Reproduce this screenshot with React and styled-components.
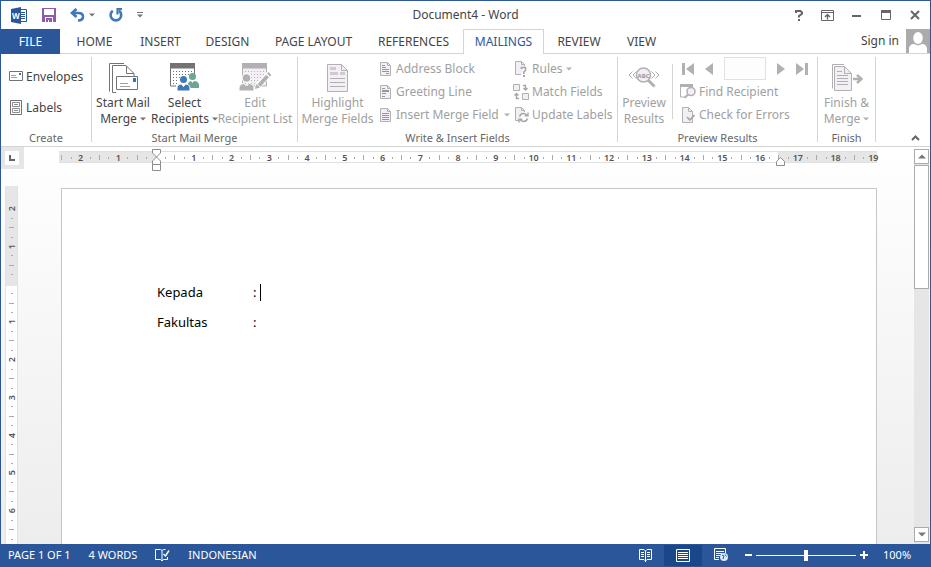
import React from 'react'
import styled, {createGlobalStyle, css} from 'styled-components'

const blue = '#2b579a'
const activeBlue = '#19478a'
const textColor = '#444444'
const mutedColor = '#a0a0a0'
const lineColor = '#d4d4d4'
const iconGray = '#737373'
const iconMuted = '#b1b1b1'
const iconMutedFill = '#f4eef6'
const uiFont = '"Noto Sans", "Open Sans", sans-serif'

const GlobalStyle = createGlobalStyle`
    *, *::before, *::after {
        box-sizing: border-box;
    }
    body {
        margin: 0;
    }
    button, input {
        font: inherit;
        color: inherit;
    }
    svg {
        display: block;
        flex: none;
    }
`

const Window = styled.div`
    display: flex;
    flex-direction: column;
    height: 100vh;
    border: 1px solid ${blue};
    background: #fff;
    color: ${textColor};
    font-family: ${uiFont};
    font-size: 12px;
    line-height: 16px;
    overflow: hidden;
`

const PlainButton = styled.button`
    display: flex;
    align-items: center;
    justify-content: center;
    padding: 0;
    border: 0;
    background: none;
    white-space: nowrap;
`

/* title bar */
const TitleBar = styled.header`
    display: grid;
    grid-template-columns: 1fr auto 1fr;
    align-items: center;
    height: 28px;
    flex: none;
`
const QuickAccess = styled.div`
    display: flex;
    align-items: center;
    gap: 14px;
    padding-left: 10px;
`
const UndoGroup = styled.div`
    display: flex;
    align-items: center;
    gap: 4px;
`
const Title = styled.h1`
    margin: 0;
    font-size: 12px;
    font-weight: 400;
`
const WindowControls = styled.div`
    display: flex;
    justify-content: flex-end;
    padding-right: 1px;
`
const WindowButton = styled(PlainButton)`
    width: 29px;
    height: 28px;
`

/* tabs */
const TabBar = styled.nav`
    display: flex;
    height: 25px;
    flex: none;
    border-bottom: 1px solid ${lineColor};
`
const Tab = styled(PlainButton)`
    width: ${p => p.$width}px;
    height: 25px;
    border: 1px solid transparent;
    border-bottom: 0;
    ${p => p.$file && css`
        background: ${blue};
        color: #fff;
    `}
    ${p => p.$active && css`
        background: #fff;
        border-color: ${lineColor};
        color: ${blue};
    `}
`
const Account = styled.div`
    display: flex;
    align-items: center;
    gap: 7px;
    height: 24px;
    margin-left: auto;
`

/* ribbon */
const Ribbon = styled.section`
    display: flex;
    height: 93px;
    flex: none;
    padding: 3px 0 4px;
    border-bottom: 1px solid ${lineColor};
`
const Group = styled.div`
    display: flex;
    flex-direction: column;
    width: ${p => p.$width}px;
    flex: none;
    border-right: 1px solid ${lineColor};
`
const GroupBody = styled.div`
    display: flex;
    flex: 1;
    padding-left: ${p => p.$pad || 0}px;
`
const GroupLabel = styled.div`
    height: 16px;
    margin-bottom: -4px;
    font-size: 11px;
    text-align: center;
    color: #666;
    white-space: nowrap;
`
const Column = styled.div`
    display: flex;
    flex-direction: column;
    width: ${p => p.$width}px;
    margin-left: ${p => p.$gap || 0}px;
`
const CreateColumn = styled(Column)`
    gap: 8px;
    padding-top: 8px;
`
const SmallButton = styled(PlainButton)`
    justify-content: flex-start;
    gap: 3px;
    height: 23px;
    color: ${p => p.disabled ? mutedColor : textColor};
`
const IconSlot = styled.span`
    display: flex;
    justify-content: center;
    width: ${p => p.$width || 14}px;
`
const MenuMark = styled.span`
    display: flex;
    margin-left: ${p => p.$gap || 0}px;
`
const LargeButton = styled(PlainButton)`
    flex-direction: column;
    justify-content: flex-start;
    width: ${p => p.$width}px;
    height: 72px;
    padding-top: 3px;
    color: ${p => p.disabled ? mutedColor : textColor};
`
const LargeIcon = styled.span`
    display: flex;
    align-items: center;
    justify-content: center;
    height: 35px;
`
const LargeLine = styled.span`
    display: flex;
    align-items: center;
    gap: 3px;
    height: 16px;
`
const Divider = styled.div`
    width: 1px;
    height: 55px;
    margin: 7px 7px 0 4px;
    background: ${lineColor};
`
const RecordNav = styled.div`
    display: flex;
    align-items: center;
    gap: 11px;
    height: 23px;
    padding-left: 2px;
`
const RecordInput = styled.input`
    width: 42px;
    height: 23px;
    padding: 0 4px;
    border: 1px solid #e1e1e1;
    background: #fdfdfd;
`
const CollapseButton = styled(PlainButton)`
    align-self: flex-end;
    width: 20px;
    height: 8px;
    margin: 0 5px 0 auto;
`

/* workspace */
const Workspace = styled.main`
    display: flex;
    flex: 1;
    min-height: 0;
    background: linear-gradient(#ffffff, #ededed);
`
const RulerColumn = styled.div`
    display: flex;
    flex-direction: column;
    width: 23px;
    flex: none;
`
const TabSelector = styled(PlainButton)`
    width: 23px;
    height: 22px;
    flex: none;
    border: 4px solid #e6e6e6;
    border-width: 4px 5px 4px 4px;
    background: #fff;
`
const VerticalRuler = styled.div`
    width: 13px;
    flex: 1;
    margin: 17px 0 0 4px;
    padding-top: 18px;
    border: 1px solid #e1e1e1;
    border-width: 0 1px;
    background: linear-gradient(#e6e6e6 100px, #fff 100px);
    overflow: hidden;
`
const VerticalScale = styled.div`
    display: flex;
    flex-direction: column;
    height: 340px;
`
const Cell = styled.span`
    display: flex;
    align-items: center;
    justify-content: center;
    flex: 1 1 0;
    min-width: 0;
    min-height: 0;
    font-size: 9px;
    line-height: 9px;
    font-weight: 600;
    color: #555;
    transform: ${p => p.$vertical ? 'rotate(-90deg)' : 'none'};
`
const Mark = styled.i`
    width: ${p => p.$vertical ? p.$size : 1}px;
    height: ${p => p.$vertical ? 1 : p.$size}px;
    flex: none;
    background: #ababab;
`
const Canvas = styled.div`
    display: flex;
    flex-direction: column;
    align-items: center;
    flex: 1;
    min-width: 0;
    overflow: hidden;
`
const HorizontalRuler = styled.div`
    position: relative;
    width: 818px;
    height: 12px;
    flex: none;
    margin: 4px 2px 0 0;
    border: 1px solid #e1e1e1;
    border-width: 1px 0;
    background: linear-gradient(90deg, #e6e6e6 97px, #fff 97px, #fff 719px, #e6e6e6 719px);
`
const HorizontalScale = styled.div`
    display: flex;
    height: 11px;
    margin: 0 -1px 0 -2px;
`
const IndentMarker = styled.span`
    position: absolute;
    top: ${p => p.$top}px;
    left: ${p => p.$left}px;
`
const Page = styled.article`
    width: 816px;
    flex: 1;
    margin-top: 25px;
    padding: 88px 95px 0;
    border: 1px solid #c6c6c6;
    border-bottom: 0;
    background: #fff;
    color: #000;
    font-size: 13px;
`
const Line = styled.p`
    display: flex;
    align-items: center;
    height: 30px;
    margin: 0;
`
const Term = styled.span`
    width: 96px;
`
const Caret = styled.span`
    width: 1px;
    height: 17px;
    margin-left: 4px;
    background: #000;
`

const ScrollBar = styled.div`
    display: flex;
    flex-direction: column;
    gap: 1px;
    width: 15px;
    margin: 2px 1px 0 0;
    padding-bottom: 2px;
    flex: none;
    background: #e6e6e6;
`
const ScrollButton = styled(PlainButton)`
    height: 15px;
    border: 1px solid #ababab;
    background: #fff;
`
const ScrollThumb = styled.div`
    height: 124px;
    margin-bottom: auto;
    border: 1px solid #ababab;
    background: #fff;
`

/* status bar */
const StatusBar = styled.footer`
    display: flex;
    align-items: center;
    height: 22px;
    flex: none;
    padding-left: 7px;
    background: ${blue};
    color: #fff;
    font-size: 11px;
`
const StatusItems = styled.div`
    display: flex;
    align-items: center;
    gap: 18px;
`
const ViewButtons = styled.div`
    display: flex;
    margin-left: auto;
`
const ViewButton = styled(PlainButton)`
    width: 38px;
    height: 21px;
    background: ${p => p.$active ? activeBlue : 'none'};
`
const Zoom = styled.div`
    display: flex;
    align-items: center;
    gap: 4px;
    margin-left: 5px;
`
const ZoomSlider = styled.input`
    appearance: none;
    width: 100px;
    height: 11px;
    margin: 0;
    background: linear-gradient(#fff, #fff) center / 100% 1px no-repeat;
    &::-webkit-slider-thumb {
        appearance: none;
        width: 4px;
        height: 11px;
        background: #fff;
    }
`
const ZoomValue = styled(PlainButton)`
    justify-content: flex-start;
    width: 62px;
    padding-left: 15px;
`

const Svg = ({w, h, children}) => (
    <svg width={w} height={h} viewBox={`0 0 ${w} ${h}`} fill="none" aria-hidden="true">{children}</svg>
)

const MenuArrow = ({color = iconGray}) => (
    <Svg w={6} h={4}><path d="M0 .5h6L3 3.5z" fill={color}/></Svg>
)

const WordLogo = () => (
    <Svg w={17} h={17}>
        <path d="M8 2.500h7.500v12H8" fill="#fff" stroke={blue}/>
        <path d="M10 5.500h4M10 7.500h4M10 9.500h4M10 11.500h4" stroke={blue}/>
        <path d="M0 2l10-2v17L0 15z" fill={blue}/>
        <text x="1" y="12" fontSize="8" fontWeight="700" fill="#fff">W</text>
    </Svg>
)
const SaveIcon = () => (
    <Svg w={14} h={14}>
        <path d="M0 0h14v14H0z" fill="#8c5bb0"/>
        <path d="M2 1h10v6H2zM3 9h8v5H3z" fill="#fff"/>
        <path d="M4 10h6v4H7v-2H6v2H4z" fill="#8c5bb0"/>
    </Svg>
)
const UndoIcon = () => (
    <Svg w={15} h={14}>
        <path d="M6.500 1L2 5l4.500 4" stroke="#4179b8" strokeWidth="2.800"/>
        <path d="M2 5h6.500c3 0 4.500 1.500 4.500 3.800s-2 3.700-5 3.700" stroke="#4179b8" strokeWidth="2.500"/>
    </Svg>
)
const RedoIcon = () => (
    <Svg w={14} h={14}>
        <path d="M3.800 2.800a5.300 5.300 0 1 0 6.200 0" stroke="#4179b8" strokeWidth="2.600"/>
        <path d="M13 1.200H8.500V6.500" stroke="#4179b8" strokeWidth="2.200"/>
    </Svg>
)
const CustomizeIcon = () => (
    <Svg w={6} h={6}><path d="M0 .5h6" stroke={iconGray}/><path d="M0 2.500h6L3 5.500z" fill={iconGray}/></Svg>
)

const RibbonOptionsIcon = () => (
    <Svg w={13} h={11}>
        <path d="M.5.5h12v10H.5zM.5 2.500h12" stroke="#666"/>
        <path d="M6.500 9.500V5M4 7l2.500-2.500L9 7" stroke="#666" strokeWidth="1.400"/>
    </Svg>
)
const MinimizeIcon = () => <Svg w={9} h={10}><path d="M0 6h9" stroke="#666" strokeWidth="2"/></Svg>
const MaximizeIcon = () => (
    <Svg w={10} h={10}><path d="M.5.5h9v9h-9z" stroke="#666"/><path d="M0 1.500h10" stroke="#666" strokeWidth="3"/></Svg>
)
const CloseIcon = () => <Svg w={10} h={10}><path d="M1 1l8 8M9 1L1 9" stroke="#666" strokeWidth="2"/></Svg>
const HelpIcon = () => (
    <Svg w={8} h={11}>
        <path d="M1 3V1h4.500L7 2.500v1.200L4 6v1.500" stroke="#666" strokeWidth="2"/>
        <path d="M3 9h2v2H3z" fill="#666"/>
    </Svg>
)
const Avatar = () => (
    <Svg w={24} h={24}>
        <path d="M0 0h24v24H0z" fill="#ababab"/>
        <ellipse cx="12" cy="9" rx="4.800" ry="6" fill="#fff"/>
        <path d="M3 24v-4c0-3 2-5 5-5l4 1.500 4-1.500c3 0 5 2 5 5v4z" fill="#fff"/>
    </Svg>
)

const EnvelopeIcon = () => (
    <Svg w={14} h={11}>
        <path d="M.5.5h13v9H.5z" fill="#fff" stroke={iconGray}/>
        <path d="M10 2h2v2h-2z" fill="#2f74b5"/>
        <path d="M2 4.500h5M2 6.500h6" stroke="#a0a0a0"/>
    </Svg>
)
const LabelsIcon = () => (
    <Svg w={12} h={15}>
        <path d="M.5.5h11v14H.5z" fill="#fff" stroke={iconGray}/>
        <path d="M2.500 2.500h7v4h-7zM2.500 8.500h7v4h-7zM4 4.500h4M4 10.500h4" stroke="#8c8c8c"/>
    </Svg>
)
const StartMergeIcon = () => (
    <Svg w={30} h={32}>
        <path d="M1.500 29.500V1.500H16" stroke={iconGray}/>
        <path d="M8 30.500H4.500v-27H18l8 8V14" fill="#fff" stroke={iconGray}/>
        <path d="M18.500 4v7.500H26" stroke={iconGray}/>
        <path d="M8.500 14.500h21v13h-21z" fill="#fff" stroke={iconGray}/>
        <path d="M25 16h3v4h-3z" fill="#2f74b5"/>
        <path d="M12 21.500h8M12 24.500h10" stroke="#a0a0a0"/>
    </Svg>
)

const DataSheet = ({color, fill}) => (
    <>
        <path d="M.5 5h24v18H.5z" fill={fill} stroke={color}/>
        <path d="M0 0h25v5H0z" fill={color}/>
        {[8, 11, 14, 17, 20].map(y => (
            <path key={y} d={`M3 ${y}.5h20`} stroke={color} strokeDasharray="1 2"/>
        ))}
    </>
)
const SelectRecipientsIcon = () => (
    <Svg w={30} h={29}>
        <DataSheet color={iconGray} fill="#fff"/>
        <path d="M15 12h14v17H6v-7z" fill="#fff"/>
        <circle cx="22.500" cy="13.500" r="3.500" fill="#6aa692"/>
        <path d="M18 25v-5c1-1 2-2 3-2l1.500 2 1.500-2c3 0 5 2 5 4v3z" fill="#6aa692"/>
        <circle cx="13.500" cy="17" r="4.500" fill="#fff"/>
        <circle cx="13.500" cy="16.500" r="3.500" fill="#4179b8"/>
        <path d="M7 28v-3c0-2.500 2-4 4.500-4l2 2.500 2-2.500c2.500 0 4.500 1.500 4.500 4v3z" fill="#4179b8" stroke="#fff"/>
    </Svg>
)
const EditRecipientsIcon = () => (
    <Svg w={33} h={29}>
        <g transform="translate(3 0)"><DataSheet color={iconMuted} fill={iconMutedFill}/></g>
        <circle cx="7.500" cy="15" r="4.800" fill="#fff"/>
        <circle cx="7.500" cy="15" r="3.800" fill={iconMuted}/>
        <path d="M0 28v-3c0-2.500 2-4.500 5-4.500l2.500 2.500 2.500-2.500c3 0 5 2 5 4.500v3z" fill={iconMuted} stroke="#fff"/>
        <path d="M18 24L30 11" stroke="#fff" strokeWidth="6"/>
        <path d="M20 22.500L28.500 13M29.500 12l1.500-1.500" stroke={iconMuted} strokeWidth="4"/>
        <path d="M16 26l1.500-5 3.500 3.500z" fill={iconMuted}/>
    </Svg>
)
const HighlightIcon = () => (
    <Svg w={21} h={28}>
        <path d="M.5.5h14l6 6v21H.5z" fill={iconMutedFill} stroke={iconMuted}/>
        <path d="M14.500.5v6h6" stroke={iconMuted}/>
        <path d="M3 4.500h6M3 9.500h8M13 9.500h5" stroke="#d0c9d3" strokeWidth="3"/>
        <path d="M3 14.500h15M3 18.500h15M3 22.500h15" stroke={iconMuted}/>
    </Svg>
)
const PreviewIcon = () => (
    <Svg w={32} h={22}>
        <path d="M4.500 4.500L1 8l3.500 3.500M8.500 4.500L5 8l3.500 3.500M23.500 4.500L27 8l-3.500 3.500M27.500 4.500L31 8l-3.500 3.500" stroke={iconMuted}/>
        <path d="M20 13l6.500 6.500" stroke={iconMuted} strokeWidth="3"/>
        <circle cx="15.500" cy="8" r="7" fill={iconMutedFill} stroke={iconMuted} strokeWidth="1.500"/>
        <text x="15.500" y="10.500" fontSize="6" fontWeight="700" textAnchor="middle" fill="#999">ABC</text>
    </Svg>
)
const FinishIcon = () => (
    <Svg w={32} h={28}>
        <path d="M1.500 24.500V.5H13" stroke={iconMuted}/>
        <path d="M3.500 26.500v-24h10l7 7v17z" fill={iconMutedFill} stroke={iconMuted}/>
        <path d="M13.500 2.500v7h7M6 7.500h5M6 11.500h11M6 14.500h11M6 17.500h11M6 20.500h11" stroke={iconMuted}/>
        <path d="M21 15h9M25.500 10.500L30 15l-4.500 4.500" stroke="#fff" strokeWidth="5"/>
        <path d="M22 15h8M26 11l4.500 4-4.500 4" stroke={iconMuted} strokeWidth="2.500"/>
    </Svg>
)

const DocIcon = ({lines}) => (
    <Svg w={12} h={14}>
        <path d="M.5.5h7l3 3v10H.5z" fill={iconMutedFill} stroke={iconMuted}/>
        <path d="M7.500.5v3h3" stroke={iconMuted}/>
        <path d={lines} stroke="#9a959d"/>
    </Svg>
)
const RulesIcon = () => (
    <Svg w={14} h={16}>
        <path d="M7 13.500H1.500V.5h6l3 3V5" fill={iconMutedFill} stroke={iconMuted}/>
        <path d="M7.500.5v3h3" stroke={iconMuted}/>
        <path d="M7.500 8V6.500h4v3L9.800 11v2" stroke="#a6a6a6" strokeWidth="1.600"/>
        <path d="M9 14h2v2H9z" fill="#a6a6a6"/>
    </Svg>
)
const MatchIcon = () => (
    <Svg w={16} h={16}>
        <path d="M.5.5h6v6h-6zM9.500 9.500h6v6h-6z" fill={iconMutedFill} stroke={iconMuted}/>
        <path d="M10 1.500h2.500V6M10.500 4l2 2 2-2M6 14.500H3.500V9.500M1.500 11.500l2-2 2 2" stroke="#a6a6a6" strokeWidth="1.400"/>
    </Svg>
)
const UpdateIcon = () => (
    <Svg w={15} h={16}>
        <path d="M5 13.500H1.500V.5h6l3 3V5" fill={iconMutedFill} stroke={iconMuted}/>
        <path d="M7.500.5v3h3" stroke={iconMuted}/>
        <path d="M5.500 9.500c.5-1.800 2-3 4-3 1.500 0 2.500.7 3.300 1.700M14 5.500v3.300h-3.300M13.500 11.500c-.5 1.800-2 3-4 3-1.500 0-2.500-.7-3.300-1.700M5 15.500v-3.300h3.300" stroke="#a6a6a6" strokeWidth="1.400"/>
    </Svg>
)
const FindIcon = () => (
    <Svg w={16} h={15}>
        <path d="M.5 2v11h4" stroke={iconMuted}/>
        <path d="M0 0h13v3H0z" fill={iconMuted}/>
        <path d="M8 10.500L4.500 14" stroke={iconMuted} strokeWidth="2.200"/>
        <circle cx="11" cy="7.500" r="4" fill={iconMutedFill} stroke={iconMuted} strokeWidth="1.600"/>
    </Svg>
)
const CheckIcon = () => (
    <Svg w={13} h={16}>
        <path d="M.5.5h6l4 4v11H.5z" fill={iconMutedFill} stroke={iconMuted}/>
        <path d="M6.500.5v4h4" stroke={iconMuted}/>
        <path d="M5 10l2.800 3L12.500 8" stroke="#a6a6a6" strokeWidth="1.800"/>
    </Svg>
)

const FirstIcon = () => <Svg w={12} h={12}><path d="M0 0h3v12H0zM12 0v12L4 6z" fill={iconMuted}/></Svg>
const PrevIcon = () => <Svg w={8} h={12}><path d="M8 0v12L0 6z" fill={iconMuted}/></Svg>
const NextIcon = () => <Svg w={8} h={12}><path d="M0 0v12l8-6z" fill={iconMuted}/></Svg>
const LastIcon = () => <Svg w={12} h={12}><path d="M9 0h3v12H9zM0 0v12l8-6z" fill={iconMuted}/></Svg>

const ProofIcon = () => (
    <Svg w={15} h={14}>
        <path d="M7 2.500L5.500 1.500h-5v10h5L7 13l1.500-1.500h4V9M7 2.500V13M7 2.500l1.500-1h2" stroke="#fff"/>
        <path d="M8.500 6l2 2L14 2.500" stroke="#fff" strokeWidth="1.400"/>
    </Svg>
)
const ReadIcon = () => (
    <Svg w={13} h={13}>
        <path d="M6.500 2L5 .5H.5v10H5L6.500 12 8 10.500h4.500V.5H8zM6.500 2v11M2 3.500h3M2 5.500h3M2 7.500h3M8 3.500h3M8 5.500h3M8 7.500h3" stroke="#fff"/>
    </Svg>
)
const PrintIcon = () => (
    <Svg w={14} h={13}><path d="M.5.5h13v12H.5zM2 3.500h10M2 5.500h10M2 7.500h10M2 9.500h10" stroke="#fff"/></Svg>
)
const WebIcon = () => (
    <Svg w={15} h={14}>
        <path d="M5 11.500H.5V.5h11V5M2 3.500h8M2 5.500h6M2 7.500h4M2 9.500h3" stroke="#fff"/>
        <circle cx="10" cy="9" r="4" fill="#dfe8f5"/>
        <path d="M8 7l2 1-1 3M11 6.500l1.500 2" stroke={blue}/>
    </Svg>
)

const tabs = [
    {name: 'FILE', width: 59, file: true},
    {name: 'HOME', width: 69},
    {name: 'INSERT', width: 63},
    {name: 'DESIGN', width: 71},
    {name: 'PAGE LAYOUT', width: 101},
    {name: 'REFERENCES', width: 99},
    {name: 'MAILINGS', width: 81, active: true},
    {name: 'REVIEW', width: 70},
    {name: 'VIEW', width: 55},
]

// four cells per centimetre: number, dot, half tick, dot
const Scale = ({from, count, vertical}) => (
    Array.from({length: count}, (_, i) => {
        const quarter = from + i
        if (quarter % 4 === 0) {
            return <Cell key={i} $vertical={vertical}>{quarter === 0 ? '' : Math.abs(quarter / 4)}</Cell>
        }
        const size = quarter % 2 === 0 ? 5 : 2
        return <Cell key={i}><Mark $size={size} $vertical={vertical}/></Cell>
    })
)

const Large = ({icon, lines, menu, ...rest}) => (
    <LargeButton {...rest}>
        <LargeIcon>{icon}</LargeIcon>
        <LargeLine>{lines[0]}</LargeLine>
        <LargeLine>{lines[1]}{menu && <MenuArrow color={rest.disabled ? iconMuted : iconGray}/>}</LargeLine>
    </LargeButton>
)

const Small = ({icon, slot, children, menu, menuGap, disabled}) => (
    <SmallButton disabled={disabled}>
        <IconSlot $width={slot}>{icon}</IconSlot>
        {children}
        {menu && <MenuMark $gap={menuGap}><MenuArrow color={iconMuted}/></MenuMark>}
    </SmallButton>
)

export default class App extends React.Component {

    state = {zoom: 100, record: ''}

    render() {
        const {zoom, record} = this.state

        return <Window>
            <GlobalStyle/>
            <TitleBar>
                <QuickAccess>
                    <WordLogo/>
                    <PlainButton aria-label="Save"><SaveIcon/></PlainButton>
                    <UndoGroup>
                        <PlainButton aria-label="Undo"><UndoIcon/></PlainButton>
                        <PlainButton aria-label="Undo history"><MenuArrow/></PlainButton>
                    </UndoGroup>
                    <PlainButton aria-label="Redo"><RedoIcon/></PlainButton>
                    <PlainButton aria-label="Customize toolbar"><CustomizeIcon/></PlainButton>
                </QuickAccess>
                <Title>Document4 - Word</Title>
                <WindowControls>
                    <WindowButton aria-label="Help"><HelpIcon/></WindowButton>
                    <WindowButton aria-label="Ribbon display options"><RibbonOptionsIcon/></WindowButton>
                    <WindowButton aria-label="Minimize"><MinimizeIcon/></WindowButton>
                    <WindowButton aria-label="Maximize"><MaximizeIcon/></WindowButton>
                    <WindowButton aria-label="Close"><CloseIcon/></WindowButton>
                </WindowControls>
            </TitleBar>

            <TabBar>
                {tabs.map(tab => (
                    <Tab key={tab.name} $width={tab.width} $file={tab.file} $active={tab.active}>{tab.name}</Tab>
                ))}
                <Account>
                    <PlainButton>Sign in</PlainButton>
                    <Avatar/>
                </Account>
            </TabBar>

            <Ribbon>
                <Group $width={91}>
                    <GroupBody $pad={8}>
                        <CreateColumn $width={80}>
                            <Small icon={<EnvelopeIcon/>}>Envelopes</Small>
                            <Small icon={<LabelsIcon/>}>Labels</Small>
                        </CreateColumn>
                    </GroupBody>
                    <GroupLabel>Create</GroupLabel>
                </Group>
                <Group $width={206}>
                    <GroupBody $pad={2}>
                        <Large $width={58} icon={<StartMergeIcon/>} lines={['Start Mail', 'Merge']} menu/>
                        <Large $width={65} icon={<SelectRecipientsIcon/>} lines={['Select', 'Recipients']} menu/>
                        <Large $width={76} icon={<EditRecipientsIcon/>} lines={['Edit', 'Recipient List']} disabled/>
                    </GroupBody>
                    <GroupLabel>Start Mail Merge</GroupLabel>
                </Group>
                <Group $width={320}>
                    <GroupBody $pad={4}>
                        <Large $width={71} icon={<HighlightIcon/>} lines={['Highlight', 'Merge Fields']} disabled/>
                        <Column $width={134} $gap={6}>
                            <Small disabled icon={<DocIcon lines="M2 3.500h3M2 5.500h4M2 7.500h7M2 9.500h7M6 11.500h3"/>}>Address Block</Small>
                            <Small disabled icon={<DocIcon lines="M2 3.500h3M2 5.500h7M2 6.500h7M2 8.500h4M2 11.500h3"/>}>Greeting Line</Small>
                            <Small disabled icon={<DocIcon lines="M2 5.500h7M2 7.500h7M2 9.500h7M2 11.500h7"/>} menu menuGap={2}>Insert Merge Field</Small>
                        </Column>
                        <Column $width={100}>
                            <Small disabled slot={16} icon={<RulesIcon/>} menu>Rules</Small>
                            <Small disabled slot={16} icon={<MatchIcon/>}>Match Fields</Small>
                            <Small disabled slot={16} icon={<UpdateIcon/>}>Update Labels</Small>
                        </Column>
                    </GroupBody>
                    <GroupLabel>Write &amp; Insert Fields</GroupLabel>
                </Group>
                <Group $width={200}>
                    <GroupBody $pad={2}>
                        <Large $width={48} icon={<PreviewIcon/>} lines={['Preview', 'Results']} disabled/>
                        <Divider/>
                        <Column $width={130}>
                            <RecordNav>
                                <PlainButton disabled aria-label="First record"><FirstIcon/></PlainButton>
                                <PlainButton disabled aria-label="Previous record"><PrevIcon/></PlainButton>
                                <RecordInput
                                    aria-label="Record"
                                    value={record}
                                    onChange={e => this.setState({record: e.target.value})}
                                />
                                <PlainButton disabled aria-label="Next record"><NextIcon/></PlainButton>
                                <PlainButton disabled aria-label="Last record"><LastIcon/></PlainButton>
                            </RecordNav>
                            <Small disabled slot={16} icon={<FindIcon/>}>Find Recipient</Small>
                            <Small disabled slot={16} icon={<CheckIcon/>}>Check for Errors</Small>
                        </Column>
                    </GroupBody>
                    <GroupLabel>Preview Results</GroupLabel>
                </Group>
                <Group $width={58}>
                    <GroupBody>
                        <Large $width={57} icon={<FinishIcon/>} lines={['Finish &', 'Merge']} menu disabled/>
                    </GroupBody>
                    <GroupLabel>Finish</GroupLabel>
                </Group>
                <CollapseButton aria-label="Collapse ribbon">
                    <Svg w={9} h={6}><path d="M1 5l3.500-3.500L8 5" stroke="#666" strokeWidth="2"/></Svg>
                </CollapseButton>
            </Ribbon>

            <Workspace>
                <RulerColumn>
                    <TabSelector aria-label="Tab stop">
                        <Svg w={6} h={6}><path d="M1 0v5h5" stroke="#666" strokeWidth="2"/></Svg>
                    </TabSelector>
                    <VerticalRuler>
                        <VerticalScale><Scale from={-8} count={36} vertical/></VerticalScale>
                    </VerticalRuler>
                </RulerColumn>
                <Canvas>
                    <HorizontalRuler>
                        <HorizontalScale><Scale from={-10} count={87}/></HorizontalScale>
                        <IndentMarker $left={93} $top={-3}>
                            <Svg w={9} h={22}>
                                <path d="M.5.5h8v3.500l-4 4-4-4zM.5 15.500V12l4-4 4 4v3.500zM.5 15.500h8v6h-8z" fill="#fff" stroke="#8c8c8c"/>
                            </Svg>
                        </IndentMarker>
                        <IndentMarker $left={717} $top={5}>
                            <Svg w={9} h={9}><path d="M.5 8.500V4.500l4-4 4 4v4z" fill="#fff" stroke="#8c8c8c"/></Svg>
                        </IndentMarker>
                    </HorizontalRuler>
                    <Page>
                        <Line><Term>Kepada</Term>:<Caret/></Line>
                        <Line><Term>Fakultas</Term>:</Line>
                    </Page>
                </Canvas>
                <ScrollBar>
                    <ScrollButton aria-label="Scroll up">
                        <Svg w={8} h={5}><path d="M0 4.500h8L4 .5z" fill="#777"/></Svg>
                    </ScrollButton>
                    <ScrollThumb/>
                    <ScrollButton aria-label="Scroll down">
                        <Svg w={8} h={5}><path d="M0 .5h8L4 4.500z" fill="#777"/></Svg>
                    </ScrollButton>
                </ScrollBar>
            </Workspace>

            <StatusBar>
                <StatusItems>
                    <span>PAGE 1 OF 1</span>
                    <span>4 WORDS</span>
                    <PlainButton aria-label="Proofing"><ProofIcon/></PlainButton>
                    <PlainButton>INDONESIAN</PlainButton>
                </StatusItems>
                <ViewButtons>
                    <ViewButton aria-label="Read mode"><ReadIcon/></ViewButton>
                    <ViewButton aria-label="Print layout" $active><PrintIcon/></ViewButton>
                    <ViewButton aria-label="Web layout"><WebIcon/></ViewButton>
                </ViewButtons>
                <Zoom>
                    <PlainButton aria-label="Zoom out">
                        <Svg w={7} h={8}><path d="M0 4h7" stroke="#fff" strokeWidth="2"/></Svg>
                    </PlainButton>
                    <ZoomSlider
                        type="range"
                        aria-label="Zoom"
                        min="0"
                        max="200"
                        value={zoom}
                        onChange={e => this.setState({zoom: e.target.value})}
                    />
                    <PlainButton aria-label="Zoom in">
                        <Svg w={8} h={8}><path d="M0 4h8M4 0v8" stroke="#fff" strokeWidth="2"/></Svg>
                    </PlainButton>
                </Zoom>
                <ZoomValue>{zoom}%</ZoomValue>
            </StatusBar>
        </Window>
    }

}
